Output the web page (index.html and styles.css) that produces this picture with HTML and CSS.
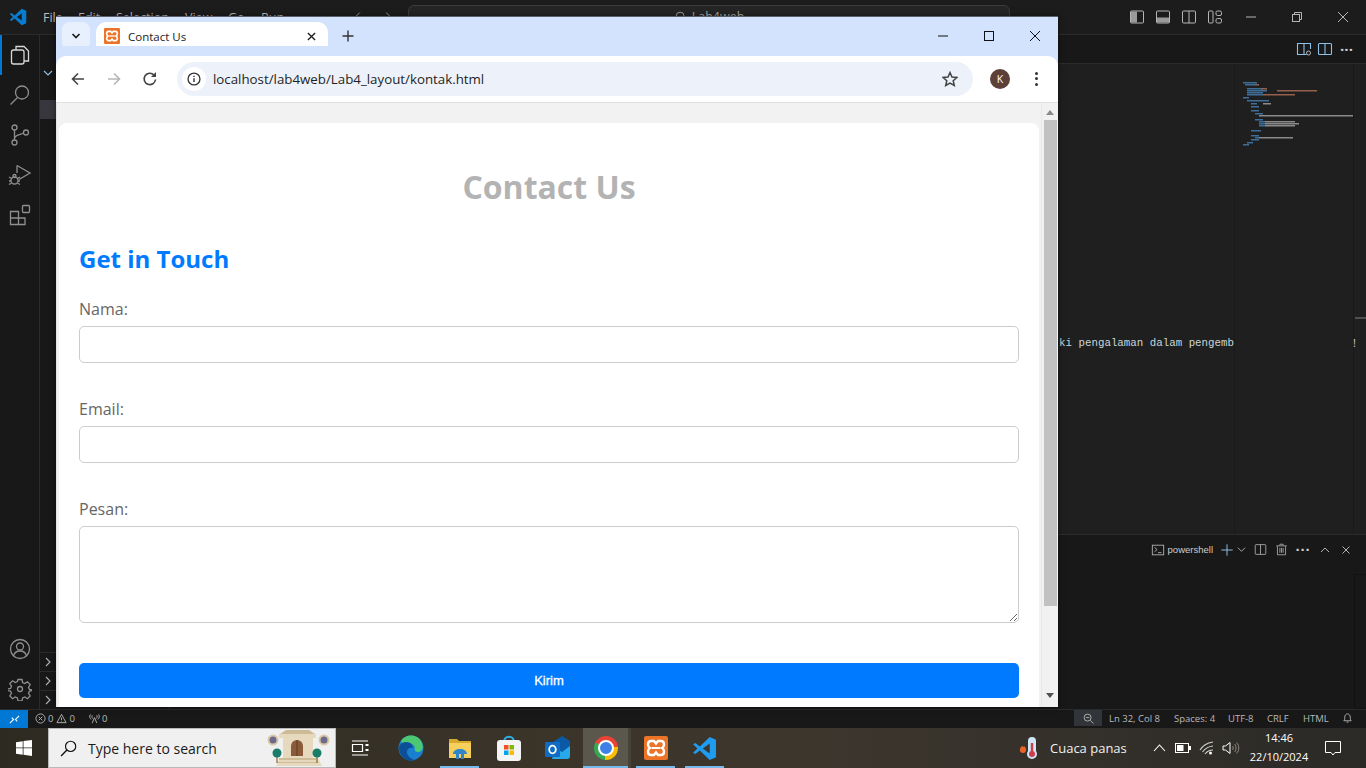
FILE: index.html
```html
<!DOCTYPE html>
<html lang="id">
<head>
  <meta charset="UTF-8" />
  <title>Contact Us</title>
  <link rel="stylesheet" href="styles.css">
</head>
<body>
<div class="desktop">

  <!-- VS Code behind the browser -->
  <div class="vscode">
    <div class="titlebar">
      <svg class="vs-logo" viewBox="0 0 24 24" width="18" height="18"><path fill="#0a7ccf" fill-rule="evenodd" d="M17 1 7.5 10 3.2 6.8 1 8l4.2 4L1 16l2.2 1.2L7.5 14l9.5 9 6-2.6V3.6zM17 7.2 10.4 12l6.600 4.800z"/></svg>
      <nav class="menu">
        <span class="m-file">File</span><span class="m-edit">Edit</span><span class="m-sel">Selection</span><span class="m-view">View</span><span class="m-go">Go</span><span class="m-run">Run</span>
      </nav>
      <div class="nav-arrows">
        <svg viewBox="0 0 16 16" width="14" height="14"><path d="M10 3 5 8l5 5" class="ln"/></svg>
        <svg viewBox="0 0 16 16" width="14" height="14"><path d="m6 3 5 5-5 5" class="ln"/></svg>
      </div>
      <div class="command-center">
        <svg viewBox="0 0 16 16" width="14" height="14"><circle cx="7" cy="7" r="4.5" class="ln"/><path d="m10.5 10.5 4 4" class="ln"/></svg>
        <span>Lab4web</span>
      </div>
      <div class="layout-btns">
        <svg viewBox="0 0 16 16" width="16" height="16"><rect x="1.5" y="2" width="13" height="12" rx="1" class="ln"/><rect x="2" y="2.5" width="6" height="11" fill="#9a9a9a"/></svg>
        <svg viewBox="0 0 16 16" width="16" height="16"><rect x="1.5" y="2" width="13" height="12" rx="1" class="ln"/><rect x="2" y="8.5" width="12" height="5" fill="#9a9a9a"/></svg>
        <svg viewBox="0 0 16 16" width="16" height="16"><rect x="1.5" y="2" width="13" height="12" rx="1" class="ln"/><path d="M8 2v12" class="ln"/></svg>
        <svg viewBox="0 0 16 16" width="16" height="16"><rect x="1.5" y="2" width="4.5" height="12" rx="1" class="ln"/><rect x="9" y="2" width="5.5" height="4.5" rx="1.5" class="ln"/><rect x="9" y="9.5" width="5.5" height="4.5" rx="1.5" class="ln"/></svg>
      </div>
      <div class="win-btns">
        <svg viewBox="0 0 12 12" width="12" height="12"><path d="M1 6h10" class="ln"/></svg>
        <svg viewBox="0 0 12 12" width="12" height="12"><rect x="1.5" y="3.5" width="7" height="7" class="ln"/><path d="M3.5 3.5v-2h7v7h-2" class="ln"/></svg>
        <svg viewBox="0 0 12 12" width="12" height="12"><path d="m1 1 10 10M11 1 1 11" class="ln"/></svg>
      </div>
    </div>

    <div class="workbench">
      <aside class="activity">
        <div class="act-top">
          <span class="act-item act-current"><svg viewBox="0 0 24 24" width="24" height="24"><path d="M8 7V3.5h8L20.500 8v10H16" class="ln-b"/><rect x="3.500" y="7" width="12.500" height="14" rx="2" class="ln-b"/></svg></span>
          <span class="act-item"><svg viewBox="0 0 24 24" width="24" height="24"><circle cx="14" cy="9.500" r="6.500" class="ln-b"/><path d="m9.500 14.500-7 7" class="ln-b"/></svg></span>
          <span class="act-item"><svg viewBox="0 0 24 24" width="24" height="24"><circle cx="6.500" cy="4.500" r="2.500" class="ln-b"/><circle cx="6.500" cy="19.500" r="2.500" class="ln-b"/><circle cx="18" cy="9.500" r="2.500" class="ln-b"/><path d="M6.500 7v10M15.500 10c-3 2-7 1-9 5" class="ln-b"/></svg></span>
          <span class="act-item"><svg viewBox="0 0 24 24" width="24" height="24"><path d="M9 2.500 22 10 11 16.500" class="ln-b"/><path d="M9 2.500V10" class="ln-b"/><circle cx="6.500" cy="17.500" r="3.500" class="ln-b"/><circle cx="6.500" cy="13" r="1.500" class="ln-b"/><path d="M1 14l2.500 1.500M1 21.500l2.500-1.500M12 14l-2.500 1.500M12 21.500 9.500 20M1 18h2M10 18h2" class="ln-b"/></svg></span>
          <span class="act-item"><svg viewBox="0 0 24 24" width="24" height="24"><path d="M2.500 8.500h8v13h-8zM2.500 15h14.500v6.500h-6.500" class="ln-b"/><rect x="14.500" y="2.500" width="7" height="7" rx="1" class="ln-b"/></svg></span>
        </div>
        <div class="act-bottom">
          <span class="act-item"><svg viewBox="0 0 24 24" width="24" height="24"><circle cx="12" cy="12" r="9.500" class="ln-b"/><circle cx="12" cy="9.500" r="3.500" class="ln-b"/><path d="M5.500 19c1-4 3.500-5 6.500-5s5.500 1 6.500 5" class="ln-b"/></svg></span>
          <span class="act-item"><svg viewBox="0 0 24 24" width="24" height="24"><circle cx="12" cy="12" r="2.500" class="ln-b"/><path d="M10 2.500h4l.6 3 2.200 1 2.600-1.700 2.800 2.800-1.700 2.600 1 2.200 3 .6v-.5 1l-3 .6-1 2.200 1.700 2.600-2.800 2.800-2.600-1.700-2.200 1-.6 3h-4l-.6-3-2.200-1-2.600 1.700-2.800-2.800 1.700-2.600-1-2.200-3-.6v-.5-1l3-.6 1-2.200-1.700-2.600 2.800-2.800 2.600 1.700 2.200-1z" class="ln-b"/></svg></span>
        </div>
      </aside>

      <aside class="sidebar">
        <div class="side-head"><svg viewBox="0 0 10 10" width="10" height="10"><path d="m1 3 4 4 4-4" class="ln-blue"/></svg></div>
        <div class="side-active"></div>
        <div class="side-fill"></div>
        <div class="side-row"><svg viewBox="0 0 10 10" width="10" height="10"><path d="m3 1 4 4-4 4" class="ln-soft"/></svg></div>
        <div class="side-row"><svg viewBox="0 0 10 10" width="10" height="10"><path d="m3 1 4 4-4 4" class="ln-soft"/></svg></div>
        <div class="side-row"><svg viewBox="0 0 10 10" width="10" height="10"><path d="m3 1 4 4-4 4" class="ln-soft"/></svg></div>
      </aside>

      <main class="editor-col">
        <div class="editor-tabs">
          <svg viewBox="0 0 16 16" width="16" height="16"><path d="M14.500 8V2.500h-13v11h9M8 2.500v11" class="ln-blue"/><circle cx="12.500" cy="12" r="2" class="ln"/></svg>
          <svg viewBox="0 0 16 16" width="16" height="16"><rect x="1.500" y="2.500" width="13" height="11" rx="1" class="ln-blue"/><path d="M8 2.500v11" class="ln-blue"/></svg>
          <span class="more">&middot;&middot;&middot;</span>
        </div>
        <div class="editor-body">
          <div class="code"><span class="code-line">ki pengalaman dalam pengemb</span></div>
          <div class="minimap">
            <svg viewBox="0 0 118 80" width="118" height="80">
              <g fill="#3f6f99">
                <rect x="8" y="2" width="14" height="1.500"/><rect x="10" y="4" width="10" height="1.500"/><rect x="12" y="8" width="16" height="1.500"/><rect x="12" y="10" width="20" height="1.500"/><rect x="12" y="12" width="16" height="1.500"/><rect x="12" y="14" width="16" height="1.500"/><rect x="8" y="17" width="6" height="1.500"/><rect x="12" y="20" width="22" height="1.500"/><rect x="16" y="23" width="6" height="1.500"/><rect x="16" y="26" width="8" height="1.500"/><rect x="16" y="30" width="8" height="1.500"/><rect x="20" y="33" width="8" height="1.500"/><rect x="20" y="39" width="8" height="1.500"/><rect x="24" y="41" width="6" height="1.500"/><rect x="24" y="43" width="6" height="1.500"/><rect x="24" y="45" width="6" height="1.500"/><rect x="16" y="50" width="10" height="1.500"/><rect x="16" y="55" width="8" height="1.500"/><rect x="20" y="57" width="4" height="1.500"/><rect x="16" y="59" width="8" height="1.500"/><rect x="12" y="62" width="6" height="1.500"/><rect x="8" y="64" width="6" height="1.500"/>
              </g>
              <g fill="#96604c">
                <rect x="20" y="4" width="4" height="1.500"/><rect x="26" y="8" width="6" height="1.500"/><rect x="42" y="10" width="40" height="1.500"/><rect x="28" y="14" width="32" height="1.500"/>
              </g>
              <g fill="#8a8a8a">
                <rect x="24" y="35" width="94" height="1.500"/><rect x="28" y="23" width="8" height="1.500"/><rect x="30" y="41" width="30" height="1.500"/><rect x="30" y="43" width="34" height="1.500"/><rect x="30" y="45" width="30" height="1.500"/><rect x="24" y="57" width="34" height="1.500"/>
              </g>
            </svg>
          </div>
          <div class="overview"><span class="overview-mark"></span><span class="overview-bang">!</span></div>
        </div>
        <div class="panel">
          <div class="panel-bar">
            <svg viewBox="0 0 16 16" width="14" height="14"><rect x="1.500" y="2.500" width="13" height="11" class="ln"/><path d="m4 5 3 2.500L4 10M8 11h4" class="ln"/></svg>
            <span class="panel-name">powershell</span>
            <svg viewBox="0 0 16 16" width="14" height="14"><path d="M8 1.500v13M1.500 8h13" class="ln-blue"/></svg>
            <svg class="tight" viewBox="0 0 10 10" width="9" height="9"><path d="m1 3 4 4 4-4" class="ln"/></svg>
            <svg viewBox="0 0 16 16" width="13" height="13"><rect x="1.500" y="2" width="13" height="12" rx="1" class="ln"/><path d="M8 2v12" class="ln"/></svg>
            <svg viewBox="0 0 16 16" width="13" height="13"><path d="M3 4v10.500h10V4M1.500 3.500h13M6 3V1.500h4V3M6 6v6M10 6v6M8 6v6" class="ln"/></svg>
            <span class="more">&middot;&middot;&middot;</span>
            <svg class="pb-up" viewBox="0 0 10 10" width="10" height="10"><path d="m1 7 4-4 4 4" class="ln"/></svg>
            <svg viewBox="0 0 10 10" width="10" height="10"><path d="m1.500 1.500 7 7M8.500 1.500l-7 7" class="ln"/></svg>
          </div>
          <div class="panel-body"><span class="term-scroll"></span></div>
        </div>
      </main>
    </div>

    <footer class="statusbar">
      <span class="remote"><svg viewBox="0 0 12 12" width="11" height="11"><path d="m1 10 4-4-2-2M11 2 7 6l2 2" fill="none" stroke="#fff" stroke-width="1.200"/></svg></span>
      <span class="st-item st-err">
        <svg viewBox="0 0 12 12" width="11" height="11"><circle cx="6" cy="6" r="5" class="ln"/><path d="m4 4 4 4M8 4 4 8" class="ln"/></svg>0
        <svg viewBox="0 0 12 12" width="11" height="11"><path d="M6 1.500 11 10.500H1zM6 5v3M6 9v.500" class="ln"/></svg>0
      </span>
      <span class="st-item st-ports">
        <svg viewBox="0 0 12 12" width="11" height="11"><path d="M6 5 3.500 11M6 5l2.500 6M1.500 1.500C0 4 1 6 2.500 7M10.500 1.500C12 4 11 6 9.500 7M3.500 2.500C3 4 3 5 4 6M8.500 2.500C9 4 9 5 8 6" class="ln"/></svg>0
      </span>
      <span class="st-right">
        <span class="st-zoom"><svg viewBox="0 0 12 12" width="11" height="11"><circle cx="5" cy="5" r="3.800" class="ln"/><path d="M3.200 5h3.600M8 8l3.500 3.500" class="ln"/></svg></span>
        <span class="st-text st-ln">Ln 32, Col 8</span>
        <span class="st-text st-sp">Spaces: 4</span>
        <span class="st-text st-utf">UTF-8</span>
        <span class="st-text st-crlf">CRLF</span>
        <span class="st-text st-html">HTML</span>
        <svg class="st-bell" viewBox="0 0 12 12" width="11" height="12"><path d="M2 9c1-1 1-2 1-4s1.500-3.500 3-3.500S9 3 9 5s0 3 1 4zM5 10.500h2" class="ln"/></svg>
      </span>
    </footer>
  </div>

  <!-- Taskbar -->
  <div class="taskbar">
    <span class="start"><svg viewBox="0 0 16 16" width="16" height="16"><path fill="#fff" d="M0 2.200 6.700 1.200V7.500H0zM7.500 1.100 16 0V7.500H7.500zM0 8.300H6.700V14.700L0 13.800zM7.500 8.300H16V16L7.500 14.800z"/></svg></span>
    <div class="search">
      <svg viewBox="0 0 16 16" width="17" height="17"><circle cx="10" cy="6" r="4.800" fill="none" stroke="#111" stroke-width="1.100"/><path d="M6.500 9.500 1 15" stroke="#111" stroke-width="1.300"/></svg>
      <span class="search-text">Type here to search</span>
      <svg class="search-art" viewBox="0 0 70 40" width="70" height="40">
        <circle cx="9" cy="12" r="4.500" fill="#6d6a8e" stroke="#d9c9a6" stroke-width="2"/>
        <circle cx="60" cy="12" r="4.500" fill="#6d6a8e" stroke="#d9c9a6" stroke-width="2"/>
        <path fill="#e6d9bd" d="M15 6h37v4h-3v20h5l4 8H12l4-8h3V10h-4z"/>
        <path fill="#cdbb97" d="M22 2h23l6 4H16zM15 30h37v2H15zM13 34h41v1H13z"/>
        <path fill="#8a5a3a" d="M27 28V18a6 6 0 0 1 12 0v10z"/>
        <path fill="#5a3a22" d="M32.500 12h1v16h-1z"/>
        <path stroke="#8a6a20" stroke-width="1.200" d="M13 26v9M53 26v9"/>
        <circle cx="13" cy="25" r="4.500" fill="#1a7d6a"/><circle cx="53" cy="25" r="4.500" fill="#1a7d6a"/>
      </svg>
    </div>
    <span class="slot slot-view"><svg viewBox="0 0 18 16" width="18" height="16"><path d="M1 1h16M1 15h16M1.500 4.500h10v7h-10z" fill="none" stroke="#fff" stroke-width="1.200"/><path d="M14.500 4h3v2h-3zM14.500 9h3v2h-3z" fill="#fff"/></svg></span>
    <span class="slot">
      <svg viewBox="0 0 26 26" width="26" height="26"><circle cx="13" cy="13" r="12.500" fill="#1b7fd0"/><path fill="#4cc772" d="M3 6C7-1 20-2 24 8c2 5 0 9-4 9-3 0-4-2-3-4-1-4-5-6-9-5-2 .5-4 1-5-2z"/><path fill="#0c4f96" d="M1 13c0-3 3-6 7-6 4 0 7 3 7 6-3-1-6 0-6 4 0 4 4 7 8 8-8 3-16-4-16-12z"/></svg>
    </span>
    <span class="slot slot-on">
      <svg viewBox="0 0 24 22" width="24" height="22"><path fill="#d8a92c" d="M1 2h8l2 2h12v3H1z"/><path fill="#f6cf5c" d="M1 6h22v15H1z"/><path fill="#2f86c9" d="M5 17c0-3 3-5 7-5s7 2 7 5h-3v5h-3v-5h-2v5H8v-5z"/></svg>
    </span>
    <span class="slot">
      <svg viewBox="0 0 24 26" width="24" height="26"><path d="M7 7c0-7 10-7 10 0" fill="none" stroke="#2bb2e8" stroke-width="2"/><rect y="5" width="24" height="21" rx="3" fill="#f4f4f4"/><path fill="#f25022" d="M7 10h4.500v4.500H7z"/><path fill="#7fba00" d="M12.500 10H17v4.500h-4.500z"/><path fill="#00a4ef" d="M7 15.500h4.500V20H7z"/><path fill="#ffb900" d="M12.500 15.500H17V20h-4.500z"/></svg>
    </span>
    <span class="slot">
      <svg viewBox="0 0 26 24" width="26" height="24"><path fill="#28a8ea" d="M9 17l16-8v11a3 3 0 0 1-3 3H7z"/><path fill="#0a5aa8" d="M8 6l9-6 8 5v5l-8 6-9-5z"/><rect y="6" width="15" height="15" rx="1" fill="#0f6cc4"/><ellipse cx="7.500" cy="13.500" rx="3.300" ry="3.800" fill="none" stroke="#fff" stroke-width="1.800"/></svg>
    </span>
    <span class="slot slot-on slot-active">
      <span class="chrome-logo"><span class="chrome-ring"></span></span>
    </span>
    <span class="slot slot-on">
      <svg viewBox="0 0 24 24" width="24" height="24"><use href="#xampp-mark"/></svg>
    </span>
    <span class="slot slot-on">
      <svg viewBox="0 0 24 24" width="25" height="25"><path fill="#1f9cf0" fill-rule="evenodd" d="M17 1 7.500 10 3.200 6.800 1 8l4.200 4L1 16l2.200 1.200L7.500 14l9.500 9 6-2.600V3.600zM17 7.200 10.400 12l6.600 4.800z"/></svg>
    </span>
    <div class="tray">
      <span class="weather-icon">
        <svg viewBox="0 0 22 24" width="22" height="24"><path fill="#e8622a" d="M4 10c-3 2-3 7 1 7s4-5 1-7c0 1-1 1-2 0z"/><rect x="10" y="1" width="8" height="18" rx="4" fill="#cfe6f5"/><circle cx="14" cy="18" r="5" fill="#cfe6f5"/><path stroke="#d13b4c" stroke-width="2.400" d="M14 7v10"/><circle cx="14" cy="18" r="3" fill="#d13b4c"/></svg>
      </span>
      <span class="weather-text">Cuaca panas</span>
      <span class="tray-icon"><svg viewBox="0 0 12 8" width="13" height="8"><path d="m.5 7 5.500-6 5.500 6" fill="none" stroke="#fff" stroke-width="1.100"/></svg></span>
      <span class="tray-icon"><svg viewBox="0 0 16 10" width="16" height="10"><rect x=".5" y=".5" width="13" height="9" fill="none" stroke="#fff"/><rect x="2" y="2" width="6.500" height="6" fill="#fff"/><rect x="14" y="3" width="2" height="4" fill="#fff"/></svg></span>
      <span class="tray-icon"><svg viewBox="0 0 16 14" width="16" height="14"><path d="M1 9C4 4 8 2 14 1M3.500 11C6 7.500 9 5.500 14 5M6 13c1.500-2 4-4 8-4" fill="none" stroke="#cfcfcf" stroke-width="1.100"/><circle cx="11.500" cy="12" r="1.500" fill="#fff"/></svg></span>
      <span class="tray-icon"><svg viewBox="0 0 18 14" width="18" height="14"><path d="M1 5h2.500L8 1.500v11L3.500 9H1z" fill="none" stroke="#fff"/><path d="M10.500 5c1 1 1 3 0 4M12.500 3c2 2 2 6 0 8M14.500 1.500c3 3 3 8 0 11" fill="none" stroke="#8f8a80"/></svg></span>
      <span class="clock"><span>14:46</span><span>22/10/2024</span></span>
      <span class="notif"><svg viewBox="0 0 16 15" width="16" height="15"><path d="M.5.500h15v11H10L8 14l-2-2.500H.5z" fill="none" stroke="#fff"/></svg></span>
    </div>
  </div>

  <!-- Browser window on top -->
  <section class="browser">
    <svg class="defs" width="0" height="0"><defs>
      <g id="xampp-mark"><rect width="24" height="24" rx="2" fill="#ec7428"/><path d="M7 5h3l2 2.500L14 5h3c2 0 3 1.500 3 3.500 0 1.500-1 3-2 3.500 1 .500 2 2 2 3.500 0 2-1 3.500-3 3.500h-3l-2-2.500L10 19H7c-2 0-3-1.500-3-3.500 0-1.500 1-3 2-3.500-1-.500-2-2-2-3.500C4 6.500 5 5 7 5z" fill="none" stroke="#fff" stroke-width="2.400"/><path d="M8 12h8" stroke="#fff" stroke-width="2"/></g>
    </defs></svg>
    <div class="tabstrip">
      <span class="tab-search"><svg viewBox="0 0 10 10" width="10" height="10"><path d="m1.500 3 3.500 3.500L8.500 3" fill="none" stroke="#1f1f1f" stroke-width="1.700"/></svg></span>
      <div class="tab">
        <svg viewBox="0 0 24 24" width="16" height="16"><use href="#xampp-mark"/></svg>
        <span class="tab-title">Contact Us</span>
        <svg class="tab-close" viewBox="0 0 10 10" width="9" height="9"><path d="m1 1 8 8M9 1 1 9" stroke="#1f1f1f" stroke-width="1.500"/></svg>
      </div>
      <svg class="tab-new" viewBox="0 0 12 12" width="12" height="12"><path d="M6 .5v11M.5 6h11" stroke="#333" stroke-width="1.400"/></svg>
      <div class="win-ctrl">
        <svg viewBox="0 0 12 12" width="12" height="12"><path d="M1 6h10" stroke="#111" stroke-width="1"/></svg>
        <svg viewBox="0 0 12 12" width="12" height="12"><rect x="1.500" y="1.500" width="9" height="9" fill="none" stroke="#111"/></svg>
        <svg viewBox="0 0 12 12" width="12" height="12"><path d="m1 1 10 10M11 1 1 11" stroke="#111" stroke-width="1"/></svg>
      </div>
    </div>
    <div class="toolbar">
      <svg class="tool" viewBox="0 0 16 16" width="16" height="16"><path d="M14 8H2.500M8 2.500 2.500 8 8 13.500" fill="none" stroke="#444" stroke-width="1.600"/></svg>
      <svg class="tool" viewBox="0 0 16 16" width="16" height="16"><path d="M2 8h11.500M8 2.500 13.500 8 8 13.500" fill="none" stroke="#b4b6b9" stroke-width="1.600"/></svg>
      <svg class="tool" viewBox="0 0 16 16" width="16" height="16"><path d="M13.500 8.500A5.700 5.700 0 1 1 12 4" fill="none" stroke="#444" stroke-width="1.600"/><path d="M14 1v5H9z" fill="#444"/></svg>
      <div class="omnibox">
        <span class="site-info"><svg viewBox="0 0 16 16" width="14" height="14"><circle cx="8" cy="8" r="6.800" fill="none" stroke="#333" stroke-width="1.500"/><path d="M8 7v4.500M8 4.300v1.500" stroke="#333" stroke-width="1.600"/></svg></span>
        <span class="url">localhost/lab4web/Lab4_layout/kontak.html</span>
        <svg class="star" viewBox="0 0 16 16" width="16" height="16"><path d="M8 1.500 10 6l4.800.5-3.600 3.200 1.100 4.800L8 12l-4.300 2.500 1.100-4.800L1.200 6.500 6 6z" fill="none" stroke="#444" stroke-width="1.500"/></svg>
      </div>
      <span class="avatar">K</span>
      <span class="kebab"><i></i><i></i><i></i></span>
    </div>
    <div class="viewport">
      <div class="page">
        <div class="card">
          <h1>Contact Us</h1>
          <h2>Get in Touch</h2>
          <form>
            <label for="nama">Nama:</label>
            <input type="text" id="nama" name="nama" />
            <label for="email">Email:</label>
            <input type="email" id="email" name="email" />
            <label for="pesan">Pesan:</label>
            <textarea id="pesan" name="pesan"></textarea>
            <button type="submit">Kirim</button>
          </form>
        </div>
      </div>
      <div class="scrollbar">
        <span class="sb-up"></span>
        <span class="sb-thumb"></span>
        <span class="sb-down"></span>
      </div>
    </div>
  </section>
</div>
</body>
</html>
```

FILE: styles.css
```css
* { box-sizing: border-box; }

html, body {
  margin: 0;
  height: 100%;
  overflow: hidden;
}

body {
  font-family: "Open Sans", sans-serif;
  background: #1f1f1f;
}

svg { display: block; flex: none; }

.ln { fill: none; stroke: #b5b5b5; stroke-width: 1; }
.ln-b { fill: none; stroke: #8f8f8f; stroke-width: 1.300; }
.ln-blue { fill: none; stroke: #8fc1e8; stroke-width: 1.100; }
.ln-soft { fill: none; stroke: #aab4bd; stroke-width: 1.100; }

.desktop {
  position: relative;
  width: 1366px;
  height: 768px;
  display: flex;
  flex-direction: column;
  overflow: hidden;
}

/* VS Code */
.vscode {
  height: 728px;
  display: flex;
  flex-direction: column;
  color: #ccc;
}

.titlebar {
  height: 35px;
  flex: none;
  display: flex;
  align-items: center;
  background: #1c1c1c;
  border-bottom: 1px solid #2b2b2b;
  font-size: 12.500px;
  padding-left: 9px;
}

.menu { display: flex; margin-left: 16px; width: 308px; color: #bdbdbd; }
.m-file { width: 35px; }
.m-edit { width: 38px; }
.m-sel { width: 69px; }
.m-view { width: 43px; }
.m-go { width: 33px; }

.nav-arrows { display: flex; gap: 16px; width: 57px; }

.command-center {
  width: 602px;
  height: 23px;
  margin-bottom: 1px;
  display: flex;
  align-items: center;
  justify-content: center;
  gap: 4px;
  background: #252525;
  border: 1px solid #3c3c3c;
  border-radius: 6px;
  color: #aaa;
}

.layout-btns { display: flex; gap: 10px; margin-left: 119px; }
.win-btns { display: flex; margin-left: 22px; gap: 34px; }

.workbench { flex: 1; display: flex; min-height: 0; }

.activity {
  width: 40px;
  flex: none;
  background: #181818;
  border-right: 1px solid #2b2b2b;
  display: flex;
  flex-direction: column;
  justify-content: space-between;
}

.act-item {
  height: 40px;
  display: flex;
  align-items: center;
  justify-content: center;
}
.act-current { border-left: 2px solid #0078d4; padding-right: 2px; }
.act-current .ln-b { stroke: #d7d7d7; }

.sidebar {
  width: 130px;
  flex: none;
  background: #181818;
  display: flex;
  flex-direction: column;
  border-right: 1px solid #2b2b2b;
}

.side-head { height: 65px; padding: 33px 0 0 3px; }
.side-active { height: 19px; background: #37373d; }
.side-fill { flex: 1; }
.side-row {
  height: 19px;
  border-top: 1px solid #2b2b2b;
  padding: 4px 0 0 3px;
}

.editor-col { flex: 1; min-width: 0; display: flex; flex-direction: column; }

.editor-tabs {
  height: 29px;
  flex: none;
  display: flex;
  justify-content: flex-end;
  align-items: center;
  gap: 5px;
  padding-right: 11px;
  background: #181818;
  border-bottom: 1px solid #2b2b2b;
}

.more { font-size: 15px; font-weight: 700; width: 18px; text-align: center; color: #ccc; line-height: 1; }
.editor-tabs .more { width: 17px; }

.editor-body {
  height: 470px;
  flex: none;
  display: flex;
  background: #1f1f1f;
}

.code {
  flex: 1;
  padding: 272px 0 0 0;
  text-align: right;
  overflow: hidden;
  font-family: "Liberation Mono", monospace;
  font-size: 10.800px;
  line-height: 14px;
  color: #c9d6dc;
}

.minimap {
  width: 120px;
  flex: none;
  padding-top: 16px;
  border-left: 1px solid #191919;
  border-right: 1px solid #191919;
  overflow: hidden;
}

.overview {
  width: 12px;
  flex: none;
  position: relative;
  font-size: 11px;
  color: #ccc;
}
.overview-mark { position: absolute; left: 1px; right: 0; top: 253px; height: 2px; background: #505050; }
.overview-bang { position: absolute; left: -1px; top: 271px; }

.panel {
  flex: 1;
  min-height: 0;
  background: #181818;
  border-top: 1px solid #2b2b2b;
  display: flex;
  flex-direction: column;
}

.panel-bar {
  height: 29px;
  flex: none;
  display: flex;
  align-items: center;
  justify-content: flex-end;
  gap: 8px;
  padding-right: 15px;
  font-family: "Liberation Sans", sans-serif;
  font-size: 9.500px;
}
.panel-name { margin: 0 -1px 0 -5px; color: #ccc; }
.tight { margin-left: -5.500px; }
.panel-bar .more { margin-left: -1.500px; }
.pb-up { margin-right: 3px; }

.panel-body { flex: 1; display: flex; justify-content: flex-end; padding-top: 10px; }
.term-scroll { width: 12px; border: 1px solid #111; border-right: 0; }

.statusbar {
  height: 19px;
  flex: none;
  display: flex;
  align-items: center;
  padding-bottom: 2px;
  background: #181818;
  border-top: 1px solid #2b2b2b;
  font-size: 9.500px;
  color: #b9b9b9;
}

.remote {
  width: 28px;
  align-self: stretch;
  margin-bottom: -2px;
  display: flex;
  align-items: center;
  justify-content: center;
  background: #0078d4;
}

.st-item { display: flex; align-items: center; gap: 2px; }
.st-err { margin-left: 7px; }
.st-ports { margin-left: 14px; }
.st-err svg + svg { margin-left: 1px; }

.st-right { margin-left: auto; display: flex; align-items: center; align-self: stretch; }
.st-zoom {
  width: 28px;
  align-self: stretch;
  display: flex;
  align-items: center;
  justify-content: center;
  background: #31353a;
}
.st-text { white-space: nowrap; }
.st-ln { margin-left: 7px; width: 65px; }
.st-sp { width: 54px; }
.st-utf { width: 39px; }
.st-crlf { width: 36px; }
.st-html { width: 39px; }
.st-bell { margin-right: 13px; }

/* Taskbar */
.taskbar {
  height: 40px;
  flex: none;
  display: flex;
  background: linear-gradient(90deg, #2d2a22 0%, #3a3429 40%, #3c362d 60%, #2b2a27 100%);
  color: #fff;
}

.start { width: 48px; display: flex; align-items: center; justify-content: center; }

.search {
  width: 288px;
  display: flex;
  align-items: center;
  background: #f0f0f0;
  border: 1px solid #b9b9b9;
  padding-left: 11px;
  color: #1b1b1b;
  overflow: hidden;
}
.search-text { margin-left: 11px; font-size: 14px; width: 172px; white-space: nowrap; }
.search-art { margin-left: 4px; }

.slot {
  width: 49px;
  display: flex;
  align-items: center;
  justify-content: center;
  position: relative;
}
.slot-view { width: 50px; padding-right: 2px; }
.slot-on::after {
  content: "";
  position: absolute;
  left: 5px;
  right: 5px;
  bottom: 0;
  height: 2px;
  background: #76b9ed;
}
.slot-active {
  background: #5c574c;
  border-right: 3px solid #47433a;
  margin-left: 1px;
  width: 48px;
}
.slot-active::after { left: 0; right: 0; }

.chrome-logo {
  width: 24px;
  height: 24px;
  border-radius: 50%;
  background: conic-gradient(from -60deg, #ea4335 0 145deg, #fbbc04 145deg 245deg, #34a853 245deg 360deg);
  display: flex;
  align-items: center;
  justify-content: center;
}
.chrome-ring {
  width: 12px;
  height: 12px;
  border-radius: 50%;
  background: #3f7fe8;
  border: 2px solid #fff;
  box-sizing: content-box;
}

.tray { margin-left: auto; display: flex; align-items: center; }
.weather-icon { width: 22px; margin-right: 10px; }
.weather-text { width: 97px; font-size: 13px; color: #f0f0f0; white-space: nowrap; }
.tray-icon { width: 24px; display: flex; justify-content: center; }
.clock {
  width: 72px;
  display: flex;
  flex-direction: column;
  align-items: center;
  padding-bottom: 2px;
  font-size: 11px;
  line-height: 19px;
}
.notif { width: 51px; display: flex; padding-left: 10px; }

/* Browser window */
.browser {
  position: absolute;
  left: 56px;
  top: 16px;
  width: 1002px;
  height: 691px;
  display: flex;
  flex-direction: column;
  border-top: 1px solid #5b6068;
  box-shadow: 0 0 6px rgba(0, 0, 0, .5);
  overflow: hidden;
}

.defs { position: absolute; }

.tabstrip {
  height: 39px;
  flex: none;
  display: flex;
  align-items: flex-end;
  background: #d3e3fd;
  padding-left: 6px;
}

.tab-search {
  width: 28px;
  height: 28px;
  margin-bottom: 6px;
  border-radius: 8px;
  background: #e9f0fd;
  display: flex;
  align-items: center;
  justify-content: center;
}

.tab {
  width: 232px;
  height: 34px;
  margin-left: 6px;
  padding: 0 12px 6px 8px;
  background: #fff;
  border-radius: 10px 10px 0 0;
  display: flex;
  align-items: center;
  font-size: 11.500px;
  color: #222;
}
.tab-title { margin-left: 8px; flex: 1; }

.tab-new { margin: 0 0 14px 14px; }

.win-ctrl {
  margin-left: auto;
  align-self: center;
  display: flex;
  gap: 34px;
  padding: 0 17px 2px 0;
}

.toolbar {
  height: 47px;
  flex: none;
  display: flex;
  align-items: center;
  background: #fff;
  border-bottom: 1px solid #e0e0e0;
  border-radius: 10px 10px 0 0;
  box-shadow: 0 -10px 0 #d3e3fd;
  padding: 0 0 1px 14px;
}
.tool { margin-right: 20px; }

.omnibox {
  width: 796px;
  height: 34px;
  margin-left: -1px;
  display: flex;
  align-items: center;
  background: #edf2fa;
  border-radius: 17px;
  padding: 0 15px 0 5px;
}
.site-info {
  width: 24px;
  height: 24px;
  border-radius: 50%;
  background: #fff;
  display: flex;
  align-items: center;
  justify-content: center;
}
.url { margin-left: 7px; flex: 1; font-size: 13.300px; color: #1f1f1f; }

.avatar {
  width: 20px;
  height: 20px;
  margin-left: 17px;
  border-radius: 50%;
  background: #5d4037;
  color: #fff;
  font-size: 10.500px;
  display: flex;
  align-items: center;
  justify-content: center;
}

.kebab { margin-left: 25px; display: flex; flex-direction: column; gap: 2.500px; }
.kebab i { width: 3px; height: 3px; border-radius: 50%; background: #333; display: block; }

.viewport { flex: 1; min-height: 0; display: flex; background: #f2f2f2; }

.page {
  width: 985px;
  flex: none;
  overflow: hidden;
  padding: 20px 2px 0 2px;
  border-left: 1px solid #e4e4e4;
}

.card {
  background: #fff;
  padding: 20px;
  border-radius: 8px;
  height: 700px;
}

h1 {
  margin: 22px 0 0;
  text-align: center;
  color: #b3b3b3;
  font-size: 32px;
  line-height: 44px;
}

h2 {
  margin: 33px 0 0;
  color: #007bff;
  font-size: 24px;
  line-height: 33px;
}

form { margin-top: 23px; }

label {
  display: block;
  color: #666;
  font-size: 16px;
  line-height: 22px;
  margin-bottom: 6px;
}

input, textarea {
  display: block;
  width: 100%;
  margin: 0 0 35px;
  padding: 10px;
  border: 1px solid #ccc;
  border-radius: 5px;
  background: #fff;
  font-family: inherit;
  font-size: 14px;
}
input { height: 37px; }
textarea { height: 97px; margin-bottom: 40px; }

button {
  display: block;
  width: 100%;
  height: 35px;
  border: 0;
  border-radius: 5px;
  background: #007bff;
  color: #fff;
  font-family: "Liberation Sans", Arial, sans-serif;
  font-size: 13px;
  -webkit-text-stroke: .3px #fff;
}

.scrollbar {
  flex: 1;
  display: flex;
  flex-direction: column;
  align-items: center;
  background: #f1f1f1;
  border-left: 1px solid #e8e8e8;
  padding-top: 7px;
}
.sb-up, .sb-down { width: 0; height: 0; border: 4px solid transparent; }
.sb-up { border-bottom: 5px solid #8a8a8a; border-top: 0; }
.sb-down { border-top: 5px solid #505050; border-bottom: 0; margin-top: 87px; }
.sb-thumb { width: 13px; height: 486px; margin-top: 5px; background: #c1c1c1; }
```
